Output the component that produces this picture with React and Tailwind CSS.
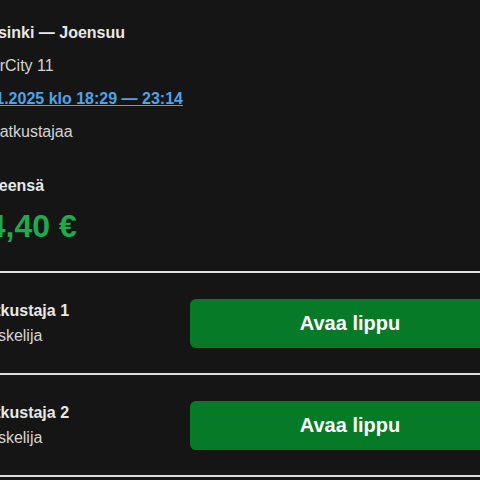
import React from "react";

const passengers = [
  { id: 1, label: "Matkustaja 1", type: "Opiskelija" },
  { id: 2, label: "Matkustaja 2", type: "Opiskelija" },
];

function PassengerRow({ passenger }) {
  return (
    <div className="flex items-center justify-between py-[25px] border-b-2 border-[#dedede]">
      <div className="flex flex-col">
        <span className="font-bold text-[16px] leading-[25px] text-[#e8e8e8]">{passenger.label}</span>
        <span className="text-[16px] leading-[25px] text-[#d4d4d4]">{passenger.type}</span>
      </div>
      <button className="w-[320px] h-[49px] rounded-[6px] bg-[#077a27] text-white font-bold text-[20px]">
        Avaa lippu
      </button>
    </div>
  );
}

export default function App() {
  return (
    <div className="w-[480px] h-[480px] overflow-hidden bg-[#151515]" style={{ fontFamily: '"Liberation Sans", Arial, sans-serif' }}>
      <div className="ml-[-27px] w-[537px]">
        <div className="pt-[21px] pb-[25px] border-b-2 border-[#dedede]">
          <div className="flex flex-col gap-[9px]">
            <span className="font-bold text-[16px] leading-6 text-[#e8e8e8]">Helsinki — Joensuu</span>
            <span className="text-[16px] leading-6 text-[#d4d4d4]">InterCity 11</span>
            <a href="#" className="font-bold text-[16px] leading-6 text-[#4ea3ec] underline">
              21.1.2025 klo 18:29 — 23:14
            </a>
            <span className="text-[16px] leading-6 text-[#d4d4d4]">2 matkustajaa</span>
          </div>
          <div className="mt-[30px] font-bold text-[16px] leading-6 text-[#e8e8e8]">Yhteensä</div>
          <div className="mt-[8px] ml-[-3px] font-bold text-[32px] leading-[40px] text-[#1eaa4e]">24,40 €</div>
        </div>
        {passengers.map((p) => (
          <PassengerRow key={p.id} passenger={p} />
        ))}
      </div>
    </div>
  );
}
